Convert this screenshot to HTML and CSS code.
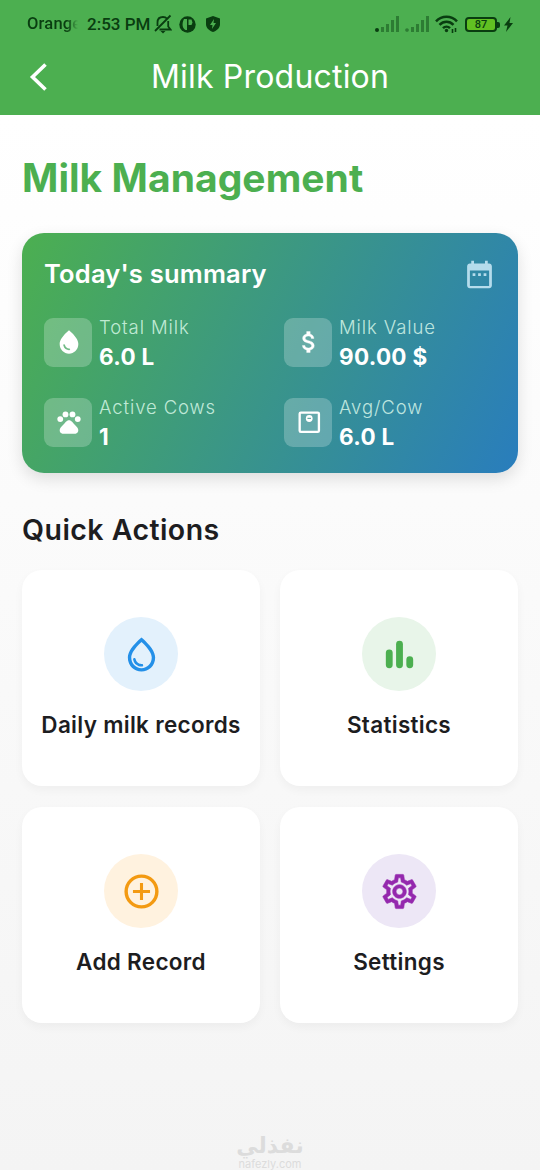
FILE: index.html
```html
<!DOCTYPE html>
<html lang="en">
<head>
<meta charset="utf-8">
<title>Milk Production</title>
<link rel="stylesheet" href="styles.css">
</head>
<body>
<div class="app">
  <header class="header">
    <div class="status">
      <div class="status-left">
        <span class="carrier">Orange</span>
        <span class="clock">2:53 PM</span>
        <svg class="bell" width="18" height="20" viewBox="0 0 18 20" fill="none" stroke="currentColor" stroke-width="1.8"><path d="M1 17 16.500 1.500M3.500 12V8.500C3.500 5 5.500 3 9 3c2 0 3 .6 4 1.700M14.200 7v5.500l2.300 3H5.500"/><path d="M6.500 17h5L9 19.500z" fill="currentColor" stroke="none"/></svg>
        <svg class="disc" width="17" height="17" viewBox="0 0 17 17"><circle cx="8.500" cy="8.500" r="8.200" fill="currentColor"/><path d="M5 3h3v11H6.500C3.500 12.500 2.500 8 5 3zM9.500 3.500h3l1 3-1 2.500h-3z" fill="#4caf50"/></svg>
        <svg class="shield" width="14" height="16" viewBox="0 0 14 16"><path d="M7 0l7 2.500V8c0 4-3 6.500-7 8-4-1.500-7-4-7-8V2.500z" fill="currentColor"/><path d="M8 3 4 9h2.500L6 13l4-6H7.500z" fill="#4caf50"/></svg>
      </div>
      <div class="status-right">
        <svg class="signal" width="24" height="16" viewBox="0 0 24 16" fill="currentColor"><circle cx="2" cy="14" r="2"/><path class="dim" d="M6 11h3v5H6zM11 8h3v8h-3zM16 4h3v12h-3zM21 0h3v16h-3z"/></svg>
        <svg class="signal" width="24" height="16" viewBox="0 0 24 16" fill="currentColor"><path class="dim" d="M2 12.200a1.800 1.800 0 1 0 .01 0zM6 11h3v5H6zM11 8h3v8h-3zM16 4h3v12h-3zM21 0h3v16h-3z"/></svg>
        <svg class="wifi" width="23" height="18" viewBox="0 0 23 18" fill="none" stroke="currentColor" stroke-width="2.600"><path d="M1 6.300c6-6 15-6 21 0M4.500 9.800c4-4 10-4 14 0M8 13.200c2-2 5-2 7 0"/><circle cx="11.500" cy="15.500" r="1.700" fill="currentColor" stroke="none"/><path d="M17.500 14v4M20.500 13v4" stroke-width="1.600"/></svg>
        <span class="battery">87</span>
        <svg class="bolt" width="9" height="15" viewBox="0 0 9 15"><path d="M6.500 0 0 8.500h3.500L2 15l7-9H5.500z" fill="currentColor"/></svg>
      </div>
    </div>
    <div class="appbar">
      <svg class="back" width="18" height="28" viewBox="0 0 18 28" fill="none" stroke="#fff" stroke-width="3.600"><path d="M16.500 1.500 3.500 14l13 12.500"/></svg>
      <h1 class="title">Milk Production</h1>
    </div>
  </header>

  <main class="content">
    <h2 class="page-title">Milk Management</h2>

    <section class="summary">
      <div class="summary-head">
        <h3 class="summary-title">Today's summary</h3>
        <svg class="calendar" width="33" height="33" viewBox="0 0 24 24" fill="currentColor"><path d="M19 4h-1V2h-2v2H8V2H6v2H5c-1.110 0-2 .9-2 2v14c0 1.100.89 2 2 2h14c1.100 0 2-.9 2-2V6c0-1.100-.9-2-2-2zm0 16.400H5V9h14v11.400zM7 11h2v2H7zm4 0h2v2h-2zm4 0h2v2h-2z"/></svg>
      </div>
      <div class="stats">
        <div class="stat">
          <div class="tile"><svg width="28" height="28" viewBox="0 0 24 24" fill="#fff"><path d="M12 2c-5.330 4.550-8 8.480-8 11.800 0 4.980 3.800 8.200 8 8.200s8-3.220 8-8.200c0-3.320-2.670-7.250-8-11.800zM7.830 14c.37 0 .67.26.74.62.41 2.220 2.280 2.980 3.640 2.870.43-.02.79.32.79.75 0 .4-.32.73-.72.75-2.130.13-4.620-1.090-5.190-4.120-.08-.45.28-.87.74-.87z"/></svg></div>
          <div><div class="label">Total Milk</div><div class="value">6.0 L</div></div>
        </div>
        <div class="stat">
          <div class="tile"><svg width="28" height="28" viewBox="0 0 24 24" fill="#fff" stroke="#fff" stroke-width=".3"><path d="M11.800 10.900c-2.270-.59-3-1.200-3-2.150 0-1.090 1.010-1.850 2.700-1.850 1.780 0 2.440.85 2.500 2.100h2.210c-.07-1.720-1.120-3.300-3.210-3.810V3h-3v2.160c-1.940.42-3.500 1.680-3.500 3.610 0 2.310 1.910 3.460 4.700 4.130 2.500.6 3 1.480 3 2.410 0 .69-.49 1.790-2.700 1.790-2.060 0-2.870-.92-2.980-2.100h-2.200c.12 2.190 1.760 3.420 3.680 3.830V21h3v-2.150c1.950-.37 3.500-1.500 3.500-3.550 0-2.840-2.430-3.810-4.700-4.400z"/></svg></div>
          <div><div class="label">Milk Value</div><div class="value">90.00 $</div></div>
        </div>
        <div class="stat">
          <div class="tile"><svg width="28" height="28" viewBox="0 0 24 24" fill="#fff"><circle cx="4.500" cy="9.500" r="2.500"/><circle cx="9" cy="5.500" r="2.500"/><circle cx="15" cy="5.500" r="2.500"/><circle cx="19.500" cy="9.500" r="2.500"/><path d="M17.340 14.860c-.87-1.020-1.600-1.890-2.480-2.910-.46-.54-1.050-1.080-1.750-1.320-.7-.2-1.500-.2-2.220 0-.7.24-1.280.78-1.750 1.320-.87 1.020-1.600 1.890-2.480 2.910-1.310 1.310-2.920 2.760-2.620 4.790.29 1.020 1.020 2.030 2.330 2.320h11.260c1.310-.29 2.040-1.310 2.330-2.320.31-2.040-1.310-3.480-2.620-4.790z"/></svg></div>
          <div><div class="label">Active Cows</div><div class="value">1</div></div>
        </div>
        <div class="stat">
          <div class="tile"><svg width="28" height="28" viewBox="0 0 24 24" fill="none" stroke="#fff" stroke-width="2"><rect x="4" y="4" width="16.500" height="16.500" rx="1"/><circle cx="12.200" cy="9" r="2.900" fill="#fff" stroke="none"/><path d="M10.700 8.900h3" stroke="#5fa9a3" stroke-width="1"/></svg></div>
          <div><div class="label">Avg/Cow</div><div class="value">6.0 L</div></div>
        </div>
      </div>
    </section>

    <h2 class="section-title">Quick Actions</h2>

    <section class="actions">
      <div class="action">
        <div class="badge blue"><svg width="41" height="41" viewBox="0 0 24 24" fill="currentColor"><path d="M12 2c-5.330 4.550-8 8.480-8 11.800 0 4.980 3.800 8.200 8 8.200s8-3.220 8-8.200c0-3.320-2.670-7.250-8-11.800zm0 18c-3.350 0-6-2.570-6-6.200 0-2.340 1.950-5.440 6-9.140 4.050 3.700 6 6.790 6 9.140 0 3.630-2.650 6.200-6 6.200zM7.830 14c.37 0 .67.26.74.62.41 2.220 2.280 2.980 3.640 2.870.43-.02.79.32.79.75 0 .4-.32.73-.72.75-2.130.13-4.620-1.090-5.190-4.120-.08-.45.28-.87.74-.87z"/></svg></div>
        <div class="action-label">Daily milk records</div>
      </div>
      <div class="action">
        <div class="badge green"><svg width="41" height="41" viewBox="0 0 24 24" fill="currentColor"><rect x="4" y="9" width="4" height="11" rx="2"/><rect x="10" y="4" width="4" height="16" rx="2"/><rect x="16" y="13" width="4" height="7" rx="2"/></svg></div>
        <div class="action-label">Statistics</div>
      </div>
      <div class="action">
        <div class="badge orange"><svg width="41" height="41" viewBox="0 0 24 24" fill="none" stroke="currentColor" stroke-width="2"><circle cx="12" cy="12" r="9"/><path d="M12 7v10M7 12h10" stroke-width="1.800"/></svg></div>
        <div class="action-label">Add Record</div>
      </div>
      <div class="action">
        <div class="badge purple"><svg width="41" height="41" viewBox="0 0 24 24" fill="currentColor" stroke="currentColor" stroke-width=".35"><path d="M19.430 12.980c.04-.32.07-.64.07-.98 0-.34-.03-.66-.07-.98l2.110-1.650c.19-.15.24-.42.12-.64l-2-3.460c-.09-.16-.26-.25-.44-.25-.06 0-.12.01-.17.03l-2.490 1c-.52-.4-1.080-.73-1.690-.98l-.38-2.650C14.460 2.180 14.250 2 14 2h-4c-.25 0-.46.18-.49.42l-.38 2.650c-.61.25-1.170.59-1.690.98l-2.490-1c-.06-.02-.12-.03-.18-.03-.17 0-.34.09-.43.25l-2 3.460c-.13.22-.07.49.12.64l2.110 1.650c-.04.32-.07.65-.07.98 0 .33.03.66.07.98l-2.110 1.650c-.19.15-.24.42-.12.64l2 3.460c.09.16.26.25.44.25.06 0 .12-.01.17-.03l2.490-1c.52.4 1.080.73 1.690.98l.38 2.650c.03.24.24.42.49.42h4c.25 0 .46-.18.49-.42l.38-2.650c.61-.25 1.170-.59 1.690-.98l2.490 1c.06.02.12.03.18.03.17 0 .34-.09.43-.25l2-3.460c.12-.22.07-.49-.12-.64l-2.110-1.650zm-1.980-1.710c.04.31.05.52.05.73 0 .21-.02.43-.05.73l-.14 1.130.89.7 1.080.84-.7 1.210-1.270-.51-1.040-.42-.9.68c-.43.32-.84.56-1.250.73l-1.060.43-.16 1.130-.2 1.350h-1.400l-.19-1.350-.16-1.130-1.060-.43c-.43-.18-.83-.41-1.230-.71l-.91-.7-1.060.43-1.270.51-.7-1.210 1.080-.84.89-.7-.14-1.130c-.03-.31-.05-.54-.05-.74s.02-.43.05-.73l.14-1.130-.89-.7-1.080-.84.7-1.210 1.270.51 1.040.42.9-.68c.43-.32.84-.56 1.250-.73l1.060-.43.16-1.130.2-1.350h1.390l.19 1.350.16 1.130 1.060.43c.43.18.83.41 1.230.71l.91.7 1.060-.43 1.270-.51.7 1.210-1.070.85-.89.7.14 1.130zM12 8c-2.210 0-4 1.790-4 4s1.790 4 4 4 4-1.790 4-4-1.790-4-4-4zm0 6c-1.100 0-2-.9-2-2s.9-2 2-2 2 .9 2 2-.9 2-2 2z"/></svg></div>
        <div class="action-label">Settings</div>
      </div>
    </section>
  </main>

  <footer class="watermark">
    <div class="mark-ar" lang="ar" dir="rtl">نفذلي</div>
    <div class="mark-en">nafezly.com</div>
  </footer>
</div>
</body>
</html>
```
FILE: styles.css
```css
* { box-sizing: border-box; }
body { margin: 0; font-family: Inter, "Liberation Sans", sans-serif; color: #1d1d1f; }
h1, h2, h3 { margin: 0; white-space: nowrap; }
svg { display: block; flex: none; }
.app { width: 540px; height: 1170px; overflow: hidden; display: flex; flex-direction: column; background: linear-gradient(#fff 10%, #f4f4f4 100%); }

.header { height: 115px; flex: none; background: #4caf50; }
.status { height: 48px; padding: 0 27px; display: flex; justify-content: space-between; align-items: center; color: #093d10; font-family: Roboto, sans-serif; font-weight: 500; }
.status-left, .status-right { display: flex; align-items: center; }
.carrier { width: 56px; font-size: 16.5px; letter-spacing: .2px; line-height: 20px; -webkit-mask-image: linear-gradient(90deg, #000 40px, transparent 51px); mask-image: linear-gradient(90deg, #000 40px, transparent 51px); }
.clock { width: 63px; margin-left: 4px; font-size: 17px; line-height: 20px; white-space: nowrap; }
.bell { margin-left: 4px; }
.disc { margin-left: 7px; }
.shield { margin-left: 10px; }
.signal { margin-right: 6px; }
.dim { opacity: .45; }
.wifi { margin-right: 7px; }
.battery { position: relative; width: 32px; height: 15px; margin-right: 7px; border: 2px solid #093d10; border-radius: 4px; background: #61c022; font-size: 11px; line-height: 11px; text-align: center; }
.battery::after { content: ""; position: absolute; right: -5px; top: 3px; width: 3px; height: 6px; border-radius: 0 2px 2px 0; background: #093d10; }
.appbar { height: 57px; display: grid; grid-template-columns: 60px 1fr 60px; align-items: center; }
.back { margin-left: 29px; }
.title { color: #fff; font-size: 32px; font-weight: 400; letter-spacing: .2px; line-height: 40px; text-align: center; }

.content { flex: 1; padding: 39px 22px 0; }
.page-title { height: 49px; margin-bottom: 30px; color: #4caf50; font-size: 39px; line-height: 48px; font-weight: 700; letter-spacing: .05px; }

.summary { height: 240px; padding: 23px 22px 0; border-radius: 22px; color: #fff; background: linear-gradient(115.8deg, #4caf50, #297dbd); box-shadow: 0 6px 16px rgba(0,0,0,.12); }
.summary-head { height: 36px; display: flex; justify-content: space-between; align-items: center; }
.summary-title { font-size: 25.500px; line-height: 32px; font-weight: 600; letter-spacing: .2px; }
.calendar { color: #b5dcec; }
.stats { margin-top: 23px; display: grid; grid-template-columns: 240px 1fr; row-gap: 26px; }
.stat { height: 54px; display: flex; gap: 7px; align-items: center; }
.tile { width: 48px; height: 49px; padding-left: 1px; display: flex; align-items: center; justify-content: center; border-radius: 9px; background: rgba(255,255,255,.23); }
.label { padding-top: 4px; color: rgba(225,255,240,.8); font-size: 18.500px; line-height: 26px; font-weight: 300; letter-spacing: .9px; white-space: nowrap; }
.value { font-size: 22.500px; line-height: 34px; font-weight: 700; letter-spacing: .3px; white-space: nowrap; }

.section-title { margin: 38px 0 22px; font-size: 28.500px; line-height: 37px; font-weight: 600; letter-spacing: .45px; }
.actions { display: grid; grid-template-columns: 238px 238px; grid-auto-rows: 216px; gap: 21px 20px; }
.action { padding-top: 47px; display: flex; flex-direction: column; align-items: center; gap: 19px; border-radius: 20px; background: #fff; box-shadow: 0 4px 10px rgba(0,0,0,.04); }
.badge { width: 74px; height: 74px; display: flex; align-items: center; justify-content: center; border-radius: 50%; }
.blue { color: #2490e8; background: #e3f1fc; }
.green { color: #4caf50; background: #e8f5e9; }
.orange { color: #f39a12; background: #fff2df; }
.purple { color: #9428ad; background: #ede7f6; }
.action-label { font-size: 22.500px; line-height: 30px; font-weight: 600; letter-spacing: .3px; white-space: nowrap; }

.watermark { flex: none; height: 36px; color: #dcdcdc; text-align: center; }
.mark-ar { height: 24px; font-family: "DejaVu Sans", sans-serif; font-weight: 700; font-size: 22px; line-height: 24px; }
.mark-en { font-size: 11px; line-height: 12px; }
```
